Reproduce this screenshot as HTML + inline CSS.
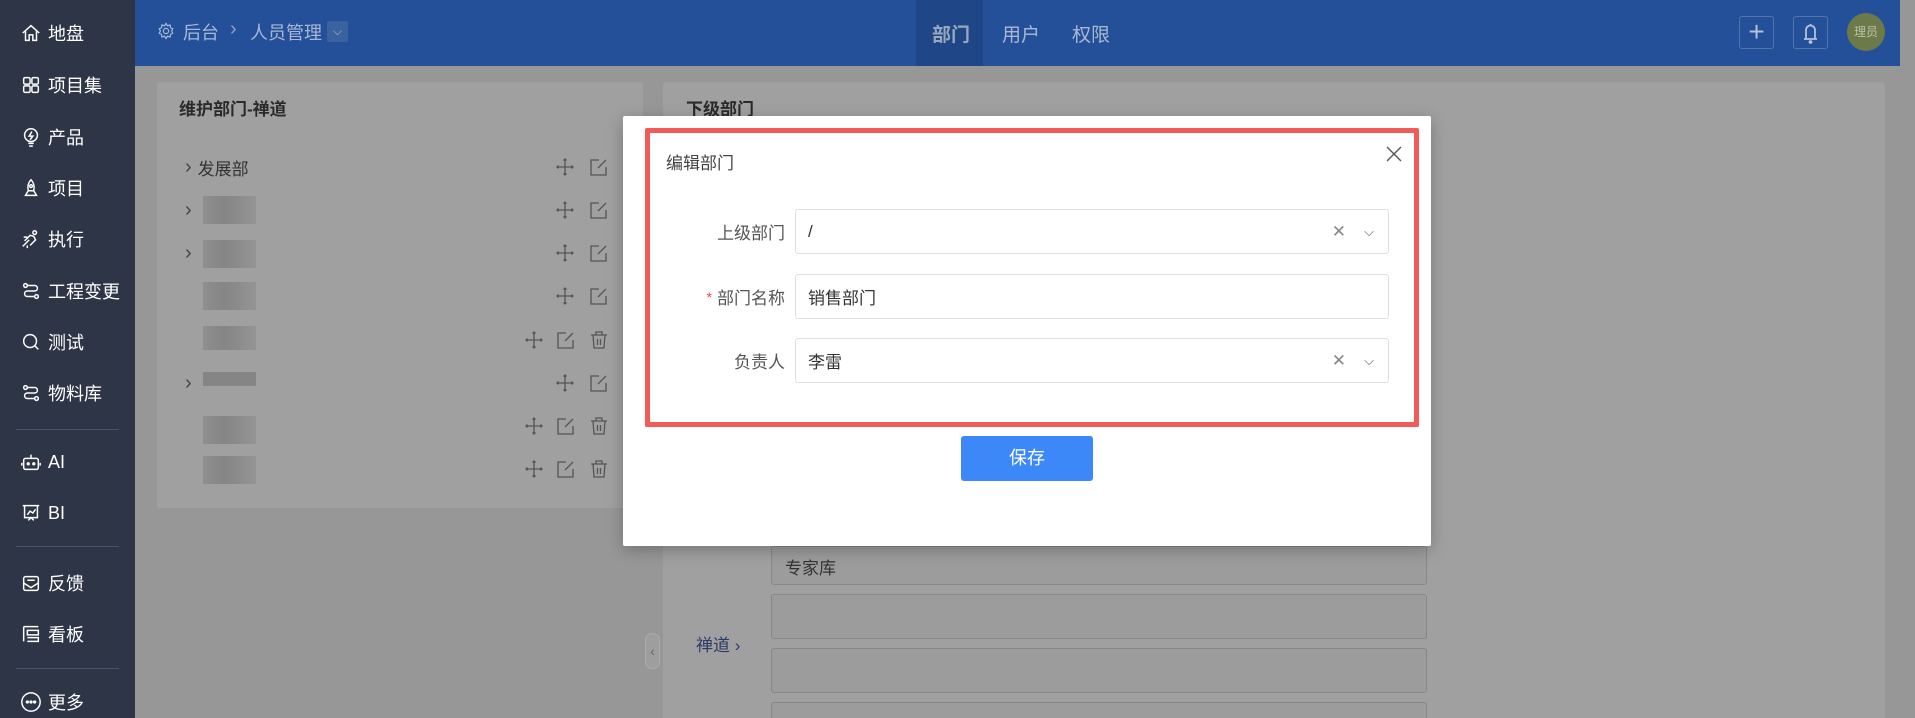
<!DOCTYPE html>
<html><head><meta charset="utf-8"><style>
*{margin:0;padding:0;box-sizing:border-box}
html,body{width:1915px;height:718px;overflow:hidden}
body{background:#979797;font-family:"Liberation Sans","Noto Sans CJK SC",sans-serif;position:relative}
.abs{position:absolute}
.side{left:0;top:0;width:135px;height:718px;background:#2e3547}
.si{position:absolute;left:20px;color:#fff;font-size:18px;display:flex;align-items:center;gap:6px;height:24px}
.si svg{width:22px;height:22px}
.div{position:absolute;left:16px;width:103px;height:1px;background:#4a5266}
.hdr{left:135px;top:0;width:1765px;height:66px;background:#24509a}
.card{background:#a0a0a0;border-radius:3px}
.row{position:absolute;left:185px;height:24px;font-size:17px;color:#333;display:flex;align-items:center}
.chev{font-size:20px;color:#444}
.blk{position:absolute;left:203px;width:53px;height:28px;background:linear-gradient(90deg,#8f8f8f,#858585 40%,#949494);}
.ic{position:absolute;width:18px;height:18px}
.inp{position:absolute;left:795px;width:594px;height:45px;border:1px solid #dcdfe6;border-radius:3px;background:#fff;font-size:17px;color:#333;padding-left:12px;display:flex;align-items:center}
.lbl{position:absolute;right:1130px;font-size:17px;color:#555;height:45px;display:flex;align-items:center}
.bg-inp{position:absolute;left:771px;width:656px;border:1px solid #878787;border-radius:3px;background:#9c9c9c}
</style></head><body>
<div class="abs side">
 <div class="si" style="top:21px"><svg viewBox="0 0 24 24" fill="none" stroke="#fff" stroke-width="1.6"><path d="M3 12L12 4l9 8M6 10v10h4v-6h4v6h4V10"/></svg>地盘</div>
 <div class="si" style="top:73px"><svg viewBox="0 0 24 24" fill="none" stroke="#fff" stroke-width="1.6"><rect x="4" y="4" width="7" height="7" rx="1.5"/><rect x="13" y="4" width="7" height="7" rx="1.5"/><rect x="4" y="13" width="7" height="7" rx="1.5"/><rect x="13" y="13" width="7" height="7" rx="1.5"/></svg>项目集</div>
 <div class="si" style="top:125px"><svg viewBox="0 0 24 24" fill="none" stroke="#fff" stroke-width="1.6"><circle cx="12" cy="10" r="7"/><path d="M13 6l-3 5h4l-3 4M9 19h6M10 22h4"/></svg>产品</div>
 <div class="si" style="top:176px"><svg viewBox="0 0 24 24" fill="none" stroke="#fff" stroke-width="1.6"><path d="M12 3c3 3 4 7 3 12H9C8 10 9 6 12 3zM9 15l-3 5h12l-3-5"/><circle cx="12" cy="10" r="1.5"/></svg>项目</div>
 <div class="si" style="top:227px"><svg viewBox="0 0 24 24" fill="none" stroke="#fff" stroke-width="1.6"><path d="M3 20l7-7M5 14l6-6 4 1 2 4-6 6M14 5a2 2 0 1 0 4 0 2 2 0 1 0-4 0M4 10h4M8 19v3"/></svg>执行</div>
 <div class="si" style="top:279px"><svg viewBox="0 0 24 24" fill="none" stroke="#fff" stroke-width="1.6"><circle cx="6" cy="6" r="2"/><circle cx="18" cy="18" r="2"/><path d="M8 6h8a3 3 0 0 1 0 6H8a3 3 0 0 0 0 6h8"/></svg>工程变更</div>
 <div class="si" style="top:330px"><svg viewBox="0 0 24 24" fill="none" stroke="#fff" stroke-width="1.6"><circle cx="11" cy="11" r="7"/><path d="M16 16l4 4"/></svg>测试</div>
 <div class="si" style="top:381px"><svg viewBox="0 0 24 24" fill="none" stroke="#fff" stroke-width="1.6"><circle cx="6" cy="6" r="2"/><circle cx="18" cy="18" r="2"/><path d="M8 6h8a3 3 0 0 1 0 6H8a3 3 0 0 0 0 6h8"/></svg>物料库</div>
 <div class="div" style="top:429px"></div>
 <div class="si" style="top:450px"><svg viewBox="0 0 24 24" fill="none" stroke="#fff" stroke-width="1.6"><rect x="4" y="8" width="16" height="12" rx="2"/><path d="M12 8V4M2 13v3M22 13v3"/><circle cx="9" cy="14" r="1" fill="#fff"/><circle cx="15" cy="14" r="1" fill="#fff"/></svg>AI</div>
 <div class="si" style="top:501px"><svg viewBox="0 0 24 24" fill="none" stroke="#fff" stroke-width="1.6"><path d="M3 4h18M5 4v13h14V4M8 14l3-4 3 2 3-4M9 20l3-3 3 3"/></svg>BI</div>
 <div class="div" style="top:546px"></div>
 <div class="si" style="top:571px"><svg viewBox="0 0 24 24" fill="none" stroke="#fff" stroke-width="1.6"><rect x="4" y="5" width="16" height="15" rx="2"/><path d="M4 12l8 5 8-5M8 9h8"/></svg>反馈</div>
 <div class="si" style="top:622px"><svg viewBox="0 0 24 24" fill="none" stroke="#fff" stroke-width="1.6"><path d="M4 4h16M4 4v16M8 8h12v5H8zM8 16h12v4H8"/></svg>看板</div>
 <div class="div" style="top:668px"></div>
 <div class="si" style="top:690px"><svg viewBox="0 0 24 24" fill="none" stroke="#fff" stroke-width="1.6"><circle cx="12" cy="12" r="10"/><circle cx="8" cy="12" r="1" fill="#fff"/><circle cx="12" cy="12" r="1" fill="#fff"/><circle cx="16" cy="12" r="1" fill="#fff"/></svg>更多</div>
</div>
<div class="abs hdr"></div>
<svg class="abs" style="left:157px;top:22px" width="18" height="18" viewBox="0 0 24 24" fill="none" stroke="#a9b8d2" stroke-width="1.6"><circle cx="12" cy="12" r="3.5"/><path d="M12 2l2 3 3.5-1 .5 3.5 3 1.5-1.5 3 1.5 3-3 1.5-.5 3.5L14 19l-2 3-2-3-3.5 1-.5-3.5-3-1.5L4.5 12 3 9l3-1.5.5-3.5L10 5z"/></svg>
<div class="abs" style="left:183px;top:19px;font-size:18px;color:#a9b8d2">后台</div>
<div class="abs" style="left:230px;top:18px;font-size:20px;color:#8ea2c4">›</div>
<div class="abs" style="left:250px;top:19px;font-size:18px;color:#a9b8d2">人员管理</div>
<div class="abs" style="left:327px;top:21px;width:21px;height:21px;background:#3a629f;border-radius:2px;color:#a9b8d2;font-size:12px;text-align:center;line-height:21px">⌵</div>
<div class="abs" style="left:916px;top:0;width:67px;height:66px;background:#1f4787"></div>
<div class="abs" style="left:932px;top:20px;font-size:19px;color:#9aa8bf;font-weight:bold">部门</div>
<div class="abs" style="left:1002px;top:20px;font-size:19px;color:#a9b8d2">用户</div>
<div class="abs" style="left:1072px;top:20px;font-size:19px;color:#a9b8d2">权限</div>
<div class="abs" style="left:1739px;top:16px;width:35px;height:33px;border:1px solid #5274ac;border-radius:3px;color:#b5c1d6;font-size:28px;text-align:center;line-height:30px">+</div>
<div class="abs" style="left:1793px;top:16px;width:35px;height:33px;border:1px solid #5274ac;border-radius:3px"><svg width="33" height="31" viewBox="0 0 33 31" fill="none" stroke="#b5c1d6" stroke-width="1.8"><path d="M10 22h13M12 22V13a4.5 4.5 0 0 1 9 0v9M16.5 7v1.5"/><circle cx="16.5" cy="25" r="1"/></svg></div>
<div class="abs" style="left:1847px;top:13px;width:38px;height:38px;border-radius:50%;background:#6c7a4a;color:#b9c1a8;font-size:12px;text-align:center;line-height:38px">理员</div>

<div class="abs card" style="left:157px;top:82px;width:486px;height:426px"></div>
<div class="abs" style="left:179px;top:95px;font-size:17px;font-weight:bold;color:#2a2a2a">维护部门-禅道</div>
<div class="row" style="top:155px"><span class="chev" style="margin-right:6px">›</span>发展部</div>
<div class="row" style="top:198px"><span class="chev">›</span></div>
<div class="row" style="top:241px"><span class="chev">›</span></div>
<div class="row" style="top:371px"><span class="chev">›</span></div>
<div class="blk" style="top:196px"></div><div class="blk" style="top:240px"></div><div class="blk" style="top:282px"></div><div class="blk" style="top:326px;height:24px"></div><div class="blk" style="top:372px;height:14px;background:#858585"></div><div class="blk" style="top:416px"></div><div class="blk" style="top:456px"></div>

<svg width="0" height="0" style="position:absolute"><defs>
<g id="mv" fill="none" stroke="#555" stroke-width="1.3"><path d="M9 1v16M1 9h16M7.5 2.5L9 1l1.5 1.5M7.5 15.5L9 17l1.5-1.5M2.5 7.5L1 9l1.5 1.5M15.5 7.5L17 9l-1.5 1.5"/></g>
<g id="ed" fill="none" stroke="#555" stroke-width="1.3"><path d="M16 9v8H1V2h8M8 10l8-8"/></g>
<g id="tr" fill="none" stroke="#555" stroke-width="1.3"><path d="M1 4h16M6 4V1h6v3M3 4l1 13h10l1-13M7.5 8v6M10.5 8v6"/></g>
</defs></svg>
<svg class="ic" style="left:556px;top:158px"><use href="#mv"/></svg><svg class="ic" style="left:590px;top:158px"><use href="#ed"/></svg>
<svg class="ic" style="left:556px;top:201px"><use href="#mv"/></svg><svg class="ic" style="left:590px;top:201px"><use href="#ed"/></svg>
<svg class="ic" style="left:556px;top:244px"><use href="#mv"/></svg><svg class="ic" style="left:590px;top:244px"><use href="#ed"/></svg>
<svg class="ic" style="left:556px;top:287px"><use href="#mv"/></svg><svg class="ic" style="left:590px;top:287px"><use href="#ed"/></svg>
<svg class="ic" style="left:525px;top:331px"><use href="#mv"/></svg><svg class="ic" style="left:557px;top:331px"><use href="#ed"/></svg><svg class="ic" style="left:590px;top:331px"><use href="#tr"/></svg>
<svg class="ic" style="left:556px;top:374px"><use href="#mv"/></svg><svg class="ic" style="left:590px;top:374px"><use href="#ed"/></svg>
<svg class="ic" style="left:525px;top:417px"><use href="#mv"/></svg><svg class="ic" style="left:557px;top:417px"><use href="#ed"/></svg><svg class="ic" style="left:590px;top:417px"><use href="#tr"/></svg>
<svg class="ic" style="left:525px;top:460px"><use href="#mv"/></svg><svg class="ic" style="left:557px;top:460px"><use href="#ed"/></svg><svg class="ic" style="left:590px;top:460px"><use href="#tr"/></svg>

<div class="abs card" style="left:663px;top:82px;width:1222px;height:640px"></div>
<div class="abs" style="left:686px;top:95px;font-size:17px;font-weight:bold;color:#2a2a2a">下级部门</div>
<div class="bg-inp" style="top:546px;height:39px"><span style="position:absolute;left:13px;top:7px;font-size:17px;color:#333">专家库</span></div>
<div class="bg-inp" style="top:594px;height:45px"></div>
<div class="bg-inp" style="top:648px;height:45px"></div>
<div class="bg-inp" style="top:702px;height:30px"></div>
<div class="abs" style="left:696px;top:631px;font-size:17px;color:#2d3a6a">禅道 ›</div>
<div class="abs" style="left:645px;top:633px;width:15px;height:36px;border:1px solid #aaa;border-radius:7px;background:#9e9e9e;color:#666;font-size:14px;text-align:center;line-height:34px">‹</div>

<div class="abs" style="left:623px;top:116px;width:808px;height:430px;background:#fff;border-radius:2px;box-shadow:0 4px 16px rgba(0,0,0,.25)"></div>
<div class="abs" style="left:645px;top:128px;width:774px;height:299px;border:5px solid #f25a5a;border-radius:2px"></div>
<div class="abs" style="left:666px;top:149px;font-size:17px;color:#444">编辑部门</div>
<svg class="abs" style="left:1386px;top:146px" width="16" height="16" viewBox="0 0 16 16" stroke="#555" stroke-width="1.4"><path d="M1 1l14 14M15 1L1 15"/></svg>
<div class="lbl" style="top:209px">上级部门</div>
<div class="inp" style="top:209px">/<span style="position:absolute;right:42px;color:#888;font-size:17px">✕</span><span style="position:absolute;right:14px;color:#555;font-size:13px">⌵</span></div>
<div class="lbl" style="top:274px"><span style="color:#e44;margin-right:5px;font-size:14px">*</span>部门名称</div>
<div class="inp" style="top:274px">销售部门</div>
<div class="lbl" style="top:338px">负责人</div>
<div class="inp" style="top:338px">李雷<span style="position:absolute;right:42px;color:#888;font-size:17px">✕</span><span style="position:absolute;right:14px;color:#555;font-size:13px">⌵</span></div>
<div class="abs" style="left:961px;top:436px;width:132px;height:45px;background:#3d88f8;border-radius:3px;color:#fff;font-size:18px;text-align:center;line-height:45px">保存</div>
</body></html>
